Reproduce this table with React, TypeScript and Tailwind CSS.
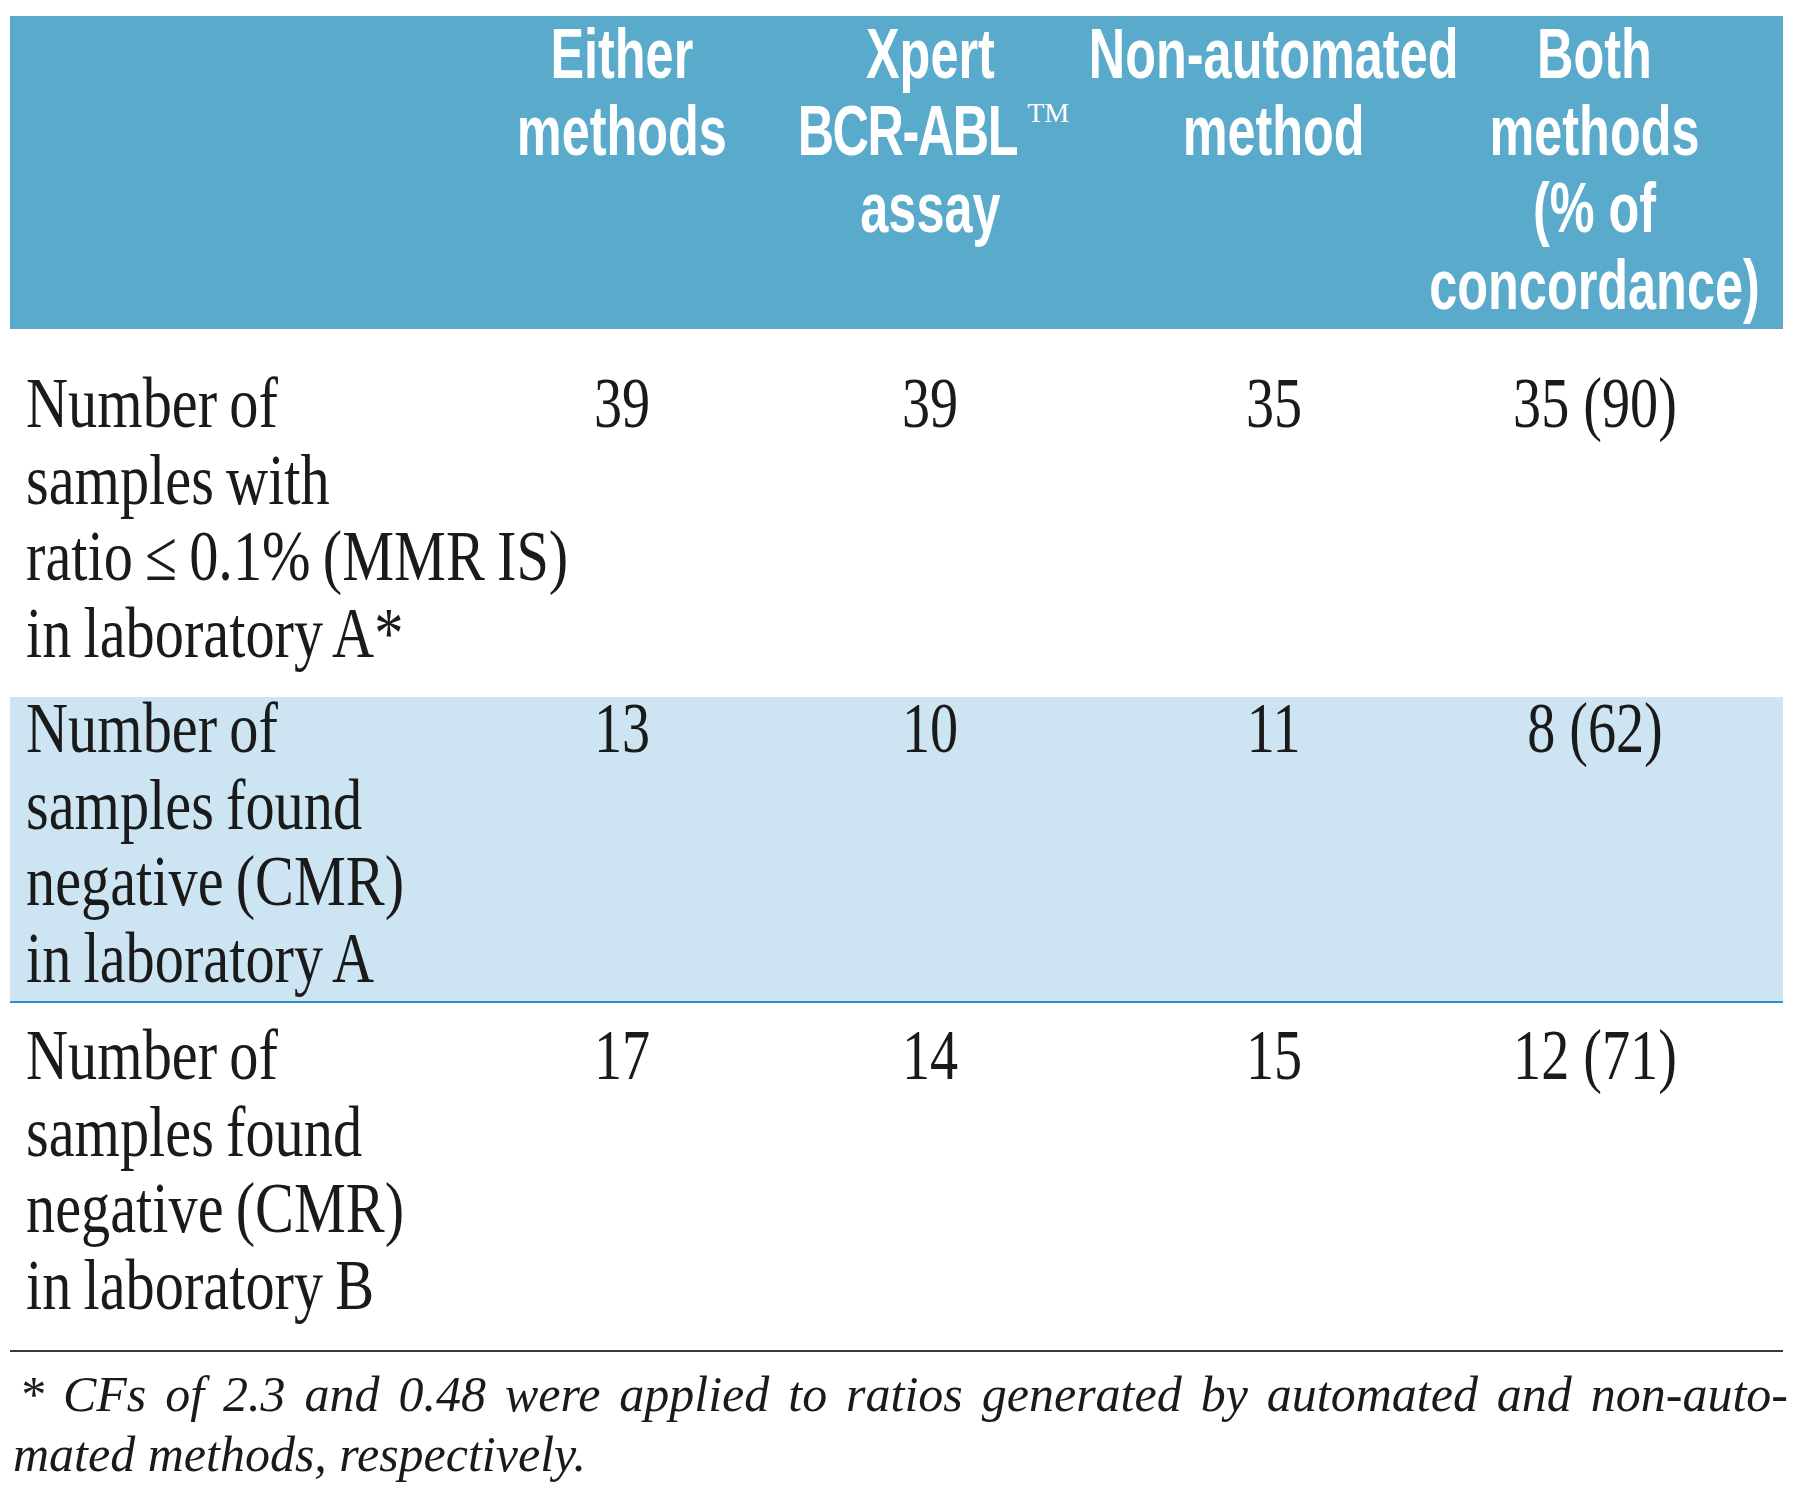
import React from "react";

const COLS = "grid grid-cols-[458px_308px_308px_380px_319px]";

function HeadCell({ lines, last }: { lines: React.ReactNode[]; last?: boolean }) {
  return (
    <div className={`flex justify-center ${last ? "pr-[58px]" : ""}`}>
      <div className="flex flex-col items-center whitespace-nowrap scale-x-[0.72] origin-center">
        {lines.map((l, i) => (
          <div key={i}>{l}</div>
        ))}
      </div>
    </div>
  );
}

function Label({ lines, shift }: { lines: string[]; shift?: boolean }) {
  return (
    <div className={`pl-[16px] ${shift ? "-mt-[7px]" : ""}`}>
      <div className="origin-left scale-x-[0.81] whitespace-nowrap [word-spacing:-3px]">
        {lines.map((l, i) => (
          <div key={i}>{l}</div>
        ))}
      </div>
    </div>
  );
}

function Num({ v, last, shift }: { v: string; last?: boolean; shift?: boolean }) {
  return (
    <div className={`flex justify-center ${last ? "pr-[58px]" : ""} ${shift ? "-mt-[7px]" : ""}`}>
      <div className="scale-x-[0.78] origin-center whitespace-nowrap">{v}</div>
    </div>
  );
}

export default function App() {
  return (
    <div className="min-h-[1504px] w-[1800px] bg-white pt-[16px] pl-[10px]">
      <div className="w-[1773px]">
        {/* Header */}
        <div
          className={`${COLS} h-[313px] bg-[#5aaacb] text-white font-bold text-[70px] leading-[77px] font-['Liberation_Sans',Arial,sans-serif]`}
        >
          <div />
          <HeadCell lines={["Either", "methods"]} />
          <HeadCell
            lines={[
              "Xpert",
              <span key="b">
                <span className="tracking-[-2px]">BCR-ABL</span>
                <span className="inline-block align-top ml-[22px] mt-[6px] font-['Liberation_Serif',serif] font-normal text-[28px] leading-none scale-x-[1.39]">
                  TM
                </span>
              </span>,
              "assay",
            ]}
          />
          <HeadCell lines={["Non-automated", "method"]} />
          <HeadCell lines={["Both", "methods", "(% of", "concordance)"]} last />
        </div>

        <div className="font-['Liberation_Serif','Times_New_Roman',serif] text-[72px] leading-[76.5px] text-[#1a1a1a]">
          {/* Row 1 */}
          <div className={`${COLS} pt-[36px] pb-[26px]`}>
            <Label lines={["Number of", "samples with", "ratio ≤ 0.1% (MMR IS)", "in laboratory A*"]} />
            <Num v="39" />
            <Num v="39" />
            <Num v="35" />
            <Num v="35 (90)" last />
          </div>

          {/* Row 2 */}
          <div className={`${COLS} bg-[#cde5f2] pb-[5px] border-b-2 border-[#2a93c5]`}>
            <Label shift lines={["Number of", "samples found", "negative (CMR)", "in laboratory A"]} />
            <Num shift v="13" />
            <Num shift v="10" />
            <Num shift v="11" />
            <Num shift v="8 (62)" last />
          </div>

          {/* Row 3 */}
          <div className={`${COLS} pt-[14px] pb-[27px] border-b-2 border-[#3a3a3a]`}>
            <Label lines={["Number of", "samples found", "negative (CMR)", "in laboratory B"]} />
            <Num v="17" />
            <Num v="14" />
            <Num v="15" />
            <Num v="12 (71)" last />
          </div>
        </div>

        {/* Footnote */}
        <div className="mt-[12px] pl-[3px] font-['Liberation_Serif','Times_New_Roman',serif] italic text-[50px] leading-[60px] text-[#1a1a1a]">
          <div className="text-justify [text-align-last:justify] pl-[6px] w-[1775px]">
            * CFs of 2.3 and 0.48 were applied to ratios generated by automated and non-auto-
          </div>
          <div>mated methods, respectively.</div>
        </div>
      </div>
    </div>
  );
}
